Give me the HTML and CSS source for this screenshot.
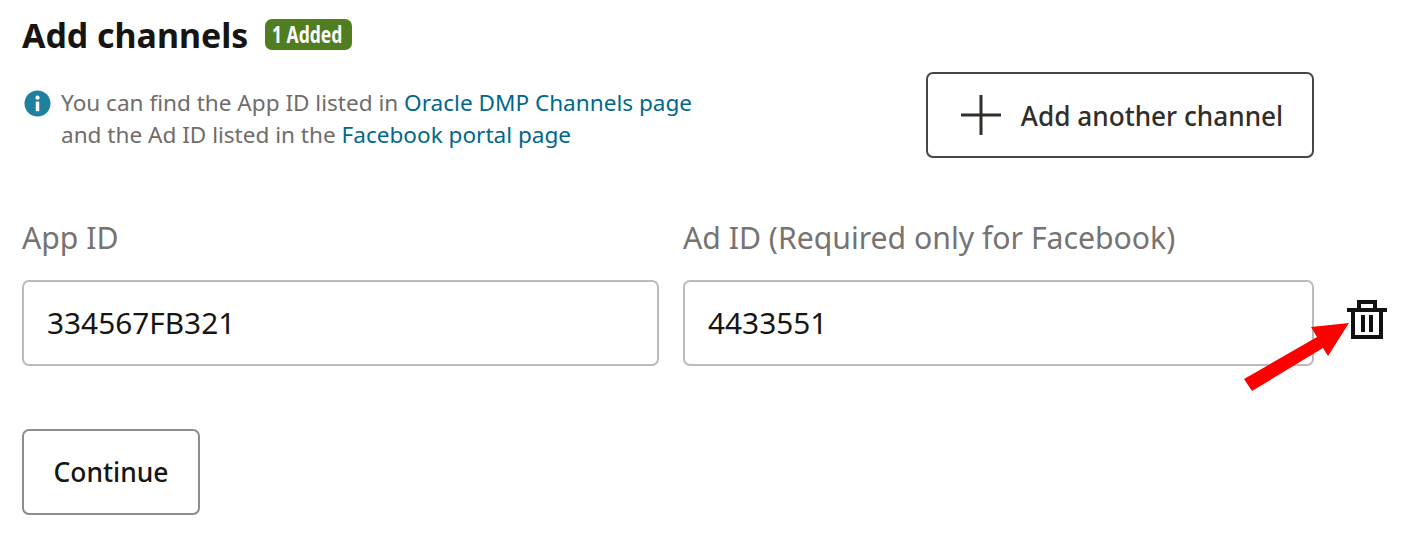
FILE: index.html
```html
<!DOCTYPE html>
<html lang="en">
<head>
<meta charset="utf-8">
<title>Add channels</title>
<link rel="stylesheet" href="styles.css">
</head>
<body>
<main class="page">
  <header class="title-row">
    <h1 class="title">Add channels</h1>
    <span class="badge"><span class="badge-text">1 Added</span></span>
  </header>
  <section class="info-row">
    <div class="info">
      <svg class="info-icon" viewBox="0 0 28 28" aria-hidden="true">
        <circle cx="14" cy="14" r="13.5" fill="#20809f"/>
        <rect x="12.2" y="12" width="3.6" height="10" fill="#fff"/>
        <circle cx="14" cy="8" r="2.2" fill="#fff"/>
      </svg>
      <p class="info-text">You can find the App ID listed in <a class="link" href="#">Oracle DMP Channels page</a><br>and the Ad ID listed in the <a class="link" href="#">Facebook portal page</a></p>
    </div>
    <button class="btn btn-add" type="button">
      <svg class="plus" viewBox="0 0 40 40" aria-hidden="true"><path d="M0 20H40M20 0V40" stroke="#312d2a" stroke-width="3" fill="none"/></svg>
      <span class="btn-add-text">Add another channel</span>
    </button>
  </section>
  <section class="fields">
    <div class="field">
      <label class="label">App ID</label>
      <div class="input">334567FB321</div>
    </div>
    <div class="field">
      <label class="label">Ad ID (Required only for Facebook)</label>
      <div class="input">4433551</div>
    </div>
    <svg class="trash" viewBox="0 0 40 40" aria-hidden="true">
      <path d="M0 10H40M6 10V37H34V10M12 10V2H28V10" fill="none" stroke="#111" stroke-width="4"/>
      <path d="M16 15V32M24 15V32" fill="none" stroke="#111" stroke-width="4"/>
    </svg>
  </section>
  <button class="btn btn-continue" type="button">Continue</button>
  <svg class="arrow" viewBox="0 0 120 100" aria-hidden="true"><polygon points="8,83 81,41 75,31 113,27 92,60 87,52 16,95" fill="#f00"/></svg>
</main>
</body>
</html>
```
FILE: styles.css
```css
* { box-sizing: border-box; }
html, body { margin: 0; background: #fff; }
body { font-family: "Noto Sans", "Open Sans", sans-serif; color: #161513; }
.page { position: relative; width: 1404px; height: 537px; padding: 14px 90px 0 22px; overflow: hidden; }
.title-row { display: flex; align-items: center; gap: 17px; height: 42px; }
.title { margin: 0; font-size: 33.900px; font-weight: 700; line-height: 42px; }
.badge { display: inline-flex; align-items: center; justify-content: center; width: 87px; height: 31px; margin-top: -1px; padding-right: 4px; background: #4f7d1f; color: #fff; border-radius: 7px; white-space: nowrap; overflow: hidden; }
.badge-text { font-size: 23.500px; font-weight: 700; line-height: 31px; transform: scaleX(.745); }
.info-row { display: flex; justify-content: space-between; margin-top: 16px; }
.info { display: flex; gap: 10px; padding: 15px 0 0 2px; }
.info-icon { width: 27px; height: 27px; flex: none; margin-top: 3px; }
.info-text { margin: 0; font-size: 22.570px; line-height: 32px; color: #6f6c69; }
.link { color: #00688c; text-decoration: none; }
.btn { display: flex; align-items: center; justify-content: center; background: #fff; font-family: inherit; border-radius: 7px; font-weight: 500; padding: 0; }
.btn-add { width: 388px; height: 86px; gap: 20px; padding: 0 0 0 4px; border: 2px solid #49453f; font-size: 26.200px; color: #312d2a; }
.btn-add-text { padding-top: 2px; }
.plus { width: 40px; height: 40px; }
.fields { position: relative; display: grid; grid-template-columns: 637px 631px; gap: 24px; margin-top: 58px; }
.field { display: flex; flex-direction: column; gap: 20px; }
.label { font-size: 30.200px; line-height: 44px; color: #767370; }
.input { display: flex; align-items: center; height: 86px; padding: 0 23px 2px; border: 2px solid #bdbbb9; border-radius: 7px; font-size: 29.800px; color: #161513; }
.trash { position: absolute; left: 1325px; top: 84px; width: 40px; height: 40px; }
.btn-continue { width: 178px; height: 86px; margin-top: 63px; border: 2px solid #8f8c89; font-size: 26.400px; color: #161513; }
.arrow { position: absolute; left: 1236px; top: 296px; width: 120px; height: 100px; }
```
